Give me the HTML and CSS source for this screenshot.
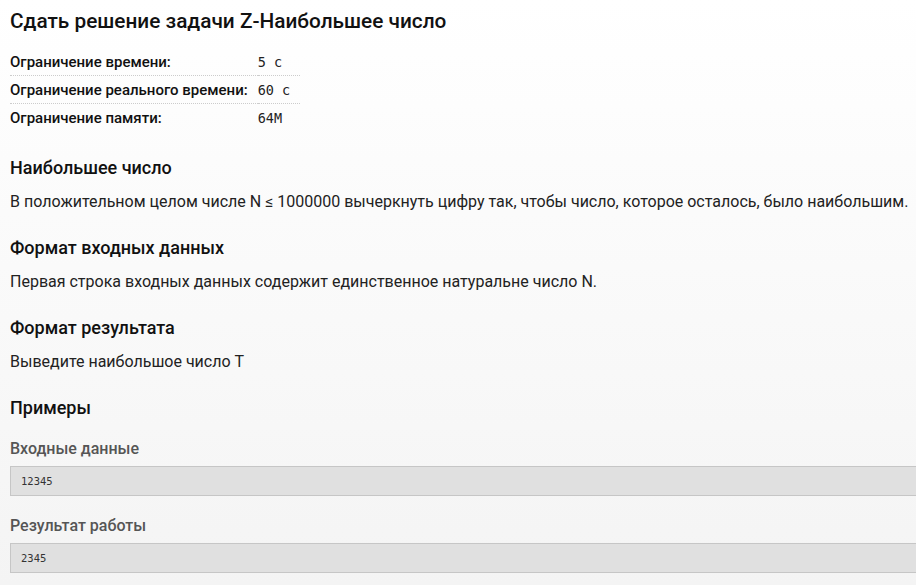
FILE: index.html
```html
<!DOCTYPE html>
<html lang="ru">
<head>
<meta charset="utf-8">
<link rel="stylesheet" href="styles.css">
</head>
<body>
<main class="page">
  <h1 class="title">Сдать решение задачи Z-Наибольшее число</h1>
  <table class="limits">
    <tr><td class="lbl">Ограничение времени:</td><td class="val">5 с</td></tr>
    <tr><td class="lbl">Ограничение реального времени:</td><td class="val">60 с</td></tr>
    <tr><td class="lbl">Ограничение памяти:</td><td class="val">64M</td></tr>
  </table>

  <h2 class="sec first">Наибольшее число</h2>
  <p class="txt">В положительном целом числе N ≤ 1000000 вычеркнуть цифру так, чтобы число, которое осталось, было наибольшим.</p>

  <h2 class="sec">Формат входных данных</h2>
  <p class="txt">Первая строка входных данных содержит единственное натуральне число N.</p>

  <h2 class="sec">Формат результата</h2>
  <p class="txt">Выведите наибольшое число T</p>

  <h2 class="sec">Примеры</h2>
  <h3 class="sub">Входные данные</h3>
  <pre class="code">12345</pre>
  <h3 class="sub">Результат работы</h3>
  <pre class="code">2345</pre>
</main>
</body>
</html>
```
FILE: styles.css
```css
html, body {
  margin: 0;
  height: 100%;
}
body {
  background: linear-gradient(#ffffff, #f4f4f4);
  font-family: Roboto, "Noto Sans", sans-serif;
  color: #111;
  overflow: hidden;
}
.page {
  padding: 9px 0 0 10px;
}
.title {
  font-size: 20.8px;
  font-weight: 500;
  margin: 0 0 15px;
  line-height: 24px;
}
.limits {
  border-collapse: collapse;
  font-size: 15px;
}
.limits td {
  padding: 0;
  height: 27px;
  vertical-align: middle;
}
.limits tr + tr td {
  border-top: 1px dotted #ccc;
}
.lbl {
  font-weight: 500;
  padding-right: 10px !important;
}
.val {
  font-family: "DejaVu Sans Mono", monospace;
  font-size: 13.5px;
  width: 42px;
  color: #222;
}
.sec {
  font-size: 18px;
  font-weight: 500;
  margin: 25px 0 0;
  line-height: 22px;
}
.sec.first {
  margin-top: 26px;
}
.txt {
  font-size: 16px;
  margin: 13px 0 0;
  line-height: 20px;
  color: #222;
}
.sub {
  font-size: 16px;
  font-weight: 500;
  color: #555;
  margin: 20px 0 0;
  line-height: 20px;
}
.code {
  margin: 7px 0 0;
  background: #e0e0e0;
  border: 1px solid #c6c6c6;
  border-right: none;
  height: 30px;
  box-sizing: border-box;
  padding: 7px 10px;
  font-family: "DejaVu Sans Mono", monospace;
  font-size: 10.5px;
  line-height: 14px;
  color: #333;
}
```
